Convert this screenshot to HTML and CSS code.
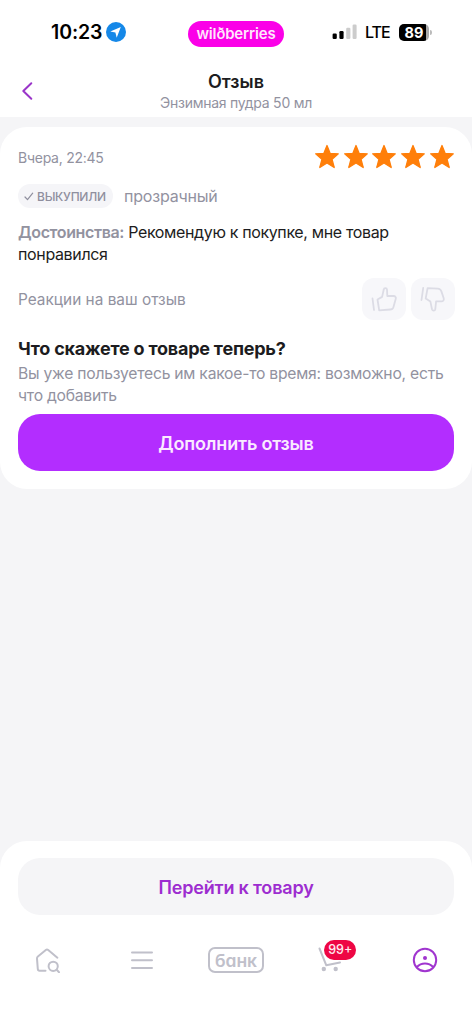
FILE: index.html
```html
<!DOCTYPE html>
<html lang="ru">
<head>
<meta charset="utf-8">
<meta name="viewport" content="width=device-width">
<title>Отзыв</title>
<link rel="stylesheet" href="styles.css">
</head>
<body>
<div class="app">
  <div class="status">
    <div class="status-left">
      <span class="clock">10:23</span>
      <svg class="location" viewBox="0 0 20 20"><circle cx="10" cy="10" r="10" fill="#1588e8"/><path d="M14.8 5.1 4.3 9.4l5.1 1.2 1.3 5.1z" fill="#fff"/></svg>
    </div>
    <div class="brand">wilðberries</div>
    <div class="status-right">
      <svg class="signal" viewBox="0 0 25 16"><rect x="0.6" y="9.5" width="4.2" height="5.5" rx="1.2" fill="#000"/><rect x="7.4" y="7" width="4.2" height="8" rx="1.2" fill="#000"/><rect x="14.2" y="3.8" width="4.2" height="11.2" rx="1.2" fill="#ccc"/><rect x="20.6" y="0.5" width="4" height="14.5" rx="1.2" fill="#ccc"/></svg>
      <span class="lte">LTE</span>
      <div class="battery"><span class="level">89</span><i class="cap"></i></div>
    </div>
  </div>
  <header class="header">
    <svg class="back" viewBox="0 0 12 20"><path d="M10.300 2.200 2.300 10l8 7.800" fill="none" stroke="#9a35c9" stroke-width="2" stroke-linecap="round" stroke-linejoin="round"/></svg>
    <div class="titles">
      <h1 class="title">Отзыв</h1>
      <div class="subtitle">Энзимная пудра 50 мл</div>
    </div>
  </header>
  <main class="content">
    <section class="card">
      <div class="meta">
        <span class="date">Вчера, 22:45</span>
        <div class="stars">
          <svg class="star" viewBox="0 0 26 26"><use href="#star"/></svg>
          <svg class="star" viewBox="0 0 26 26"><use href="#star"/></svg>
          <svg class="star" viewBox="0 0 26 26"><use href="#star"/></svg>
          <svg class="star" viewBox="0 0 26 26"><use href="#star"/></svg>
          <svg class="star" viewBox="0 0 26 26"><path id="star" d="m13 1.500 3.200 7.900 8.100.4-6.200 5.500 2.100 8.200-7.200-4.500-7.200 4.500 2.100-8.200L1.700 9.800l8.100-.4z" fill="#ff7f0a" stroke="#ff7f0a" stroke-width="1.300" stroke-linejoin="round"/></svg>
        </div>
      </div>
      <div class="tags">
        <span class="bought"><svg class="check" viewBox="0 0 10 9"><path d="m1 5 2.500 2.700L8.700 1.200" fill="none" stroke="#8f8f9e" stroke-width="1.200" stroke-linecap="round" stroke-linejoin="round"/></svg><span class="bought-text">ВЫКУПИЛИ</span></span>
        <span class="color">прозрачный</span>
      </div>
      <p class="review"><span class="pros">Достоинства:</span> <span class="text">Рекомендую к покупке, мне товар<br>понравился</span></p>
      <div class="reactions">
        <span class="reaction-label">Реакции на ваш отзыв</span>
        <div class="votes">
          <span class="vote"><svg class="thumb" viewBox="0 0 26 26"><g fill="none" stroke="#dcdce5" stroke-width="1.800" stroke-linejoin="round" stroke-linecap="round"><path d="M1.500 12.500 3 24M6.500 13.500l4.600-2.600 1.700-7.600c.3-1.700 3-1.600 3.200.2l.3 6.500h6.200c2 0 2.700 1.500 2.200 3l-2.300 8.200c-.5 1.600-1.400 2.300-3.200 2.300l-11 .8z"/></g></svg></span>
          <span class="vote"><svg class="thumb" viewBox="0 0 26 26"><g fill="none" stroke="#dcdce5" stroke-width="1.800" stroke-linejoin="round" stroke-linecap="round"><path d="M3.200 1.800 1.500 14M7.600 2.200l10.200.5c2 .1 3 1 3.600 2.700l2.300 6.800c.5 2-.5 3.200-2.400 3.200h-5.200l-.8 7.800c-.3 1.900-2.800 1.900-3.300.1l-1.600-7.700-4.700-3.200z"/></g></svg></span>
        </div>
      </div>
      <h2 class="question">Что скажете о товаре теперь?</h2>
      <p class="hint">Вы уже пользуетесь им какое-то время: возможно, есть<br>что добавить</p>
      <button class="button primary">Дополнить отзыв</button>
    </section>
  </main>
  <footer class="bottom">
    <button class="button secondary">Перейти к товару</button>
    <nav class="tabs">
      <span class="tab"><svg class="icon" viewBox="0 0 26 26"><g fill="none" stroke="#c0c0ca" stroke-width="2" stroke-linecap="round" stroke-linejoin="round"><path d="M11.500 23.700H5.600q-1.700 0-1.800-1.700L3 11.600q-.1-1.300.9-2.100L11.800 3q1.200-1 2.400 0l9.200 7.700"/><circle cx="19.200" cy="19.300" r="4.600"/><path d="m22.700 22.800 2.300 2.400"/></g></svg></span>
      <span class="tab"><svg class="icon" viewBox="0 0 26 26"><path d="M3 5.500h20M3 13.200h20M3 21h20" stroke="#c0c0ca" stroke-width="2" stroke-linecap="round"/></svg></span>
      <span class="tab"><span class="bank">банк</span></span>
      <span class="tab cart"><svg class="icon" viewBox="0 0 26 26"><path d="m2.500 1.500 6.800 16.800 13.700-2.800" fill="none" stroke="#c0c0ca" stroke-width="2" stroke-linecap="round" stroke-linejoin="round"/><circle cx="6.800" cy="22" r="2.200" fill="#c0c0ca"/><circle cx="18.700" cy="22" r="2.200" fill="#c0c0ca"/></svg><span class="badge">99+</span></span>
      <span class="tab"><svg class="icon" viewBox="0 0 26 26"><g fill="none" stroke="#a035cf" stroke-width="2"><circle cx="13" cy="13" r="11.200"/><path d="M4.600 20.200c4.800-5 12-5 16.800 0"/></g><circle cx="13" cy="10.900" r="2" fill="#a035cf"/></svg></span>
    </nav>
  </footer>
</div>
</body>
</html>
```
FILE: styles.css
```css
* { box-sizing: border-box; }
body { margin: 0; font-family: Inter, "Liberation Sans", sans-serif; color: #1c1c20; background: #f5f5f7; }
h1, h2, p { margin: 0; }
svg { display: block; flex: none; }
.app { width: 472px; height: 1024px; display: flex; flex-direction: column; overflow: hidden; white-space: nowrap; }

.status { height: 66px; background: #fff; display: grid; grid-template-columns: 188px 96px 1fr; align-items: center; }
.status-left { display: flex; align-items: center; gap: 4px; padding-left: 51px; margin-top: -2px; }
.clock { font-size: 19.5px; font-weight: 600; color: #000; letter-spacing: -0.1px; width: 51px; }
.location { width: 20px; height: 20px; }
.brand { height: 26px; border-radius: 13px; background: #fb00e8; color: #ffe6fc; font-size: 15px; font-weight: 600; line-height: 25px; text-align: center; letter-spacing: -0.15px; margin-top: 2px; }
.status-right { display: flex; align-items: center; padding-left: 48px; margin-top: -2px; }
.signal { width: 25px; height: 16px; }
.lte { font-size: 16px; font-weight: 500; color: #000; margin-left: 8px; letter-spacing: -1px; width: 25px; }
.battery { display: flex; align-items: center; gap: 1px; margin-left: 9px; }
.level { width: 30px; height: 17px; border-radius: 5px; background: linear-gradient(90deg, #000 27px, #aaa 27px); color: #fff; font-size: 14.500px; font-weight: 700; line-height: 17px; text-align: center; }
.cap { width: 2px; height: 5px; border-radius: 0 2px 2px 0; background: #bbb; }

.header { height: 51px; background: #fff; display: grid; grid-template-columns: 60px 1fr 60px; }
.back { width: 12px; height: 20px; margin: 15px 0 0 21px; }
.titles { text-align: center; padding-top: 5px; }
.title { font-size: 18px; line-height: 22px; font-weight: 600; }
.subtitle { font-size: 14px; line-height: 19px; color: #92929f; letter-spacing: -0.25px; }

.content { flex: 1; padding-top: 10px; }
.card { background: #fff; border-radius: 27px; height: 362px; padding: 14px 18px 18px; }
.meta { display: flex; justify-content: space-between; align-items: center; height: 32px; }
.date { font-size: 14px; color: #92929f; letter-spacing: -0.25px; }
.stars { display: flex; gap: 2.600px; margin-right: -0.5px; }
.star { width: 26px; height: 26px; }
.tags { display: flex; align-items: center; height: 24px; margin-top: 11px; }
.bought { display: flex; align-items: center; width: 95px; height: 24px; border-radius: 12px; background: #f5f5f8; padding-left: 6px; gap: 3px; }
.check { width: 10px; height: 9px; }
.bought-text { font-size: 12px; font-weight: 500; color: #8f8f9e; letter-spacing: -0.25px; }
.color { font-size: 16px; color: #92929f; margin-left: 11px; letter-spacing: -0.2px; }
.review { font-size: 16px; line-height: 22px; margin-top: 13px; letter-spacing: -0.36px; }
.pros { color: #92929f; font-weight: 600; letter-spacing: -0.37px; }
.reactions { display: flex; justify-content: space-between; align-items: center; height: 42px; margin-top: 13px; }
.reaction-label { font-size: 15.400px; color: #92929f; }
.votes { display: flex; gap: 5px; margin-right: -1px; }
.vote { width: 44px; height: 42px; border-radius: 12px; background: #f7f7fa; display: flex; align-items: center; justify-content: center; }
.thumb { width: 26px; height: 26px; }
.question { font-size: 18px; line-height: 24px; font-weight: 700; margin-top: 17px; letter-spacing: -0.22px; }
.hint { font-size: 15.700px; line-height: 22px; color: #92929f; margin-top: 2px; letter-spacing: -0.24px; }

.button { display: block; width: 100%; height: 57px; border: 0; border-radius: 22px; padding: 2px 0 0; font-family: inherit; font-size: 18px; font-weight: 600; letter-spacing: -0.18px; }
.primary { background: #b32dff; color: #faeaff; margin-top: 7px; }
.secondary { background: #f5f5f7; color: #9d2dd0; }

.bottom { height: 183px; background: #fff; border-radius: 27px 27px 0 0; padding-top: 17px; }
.bottom .button { width: 436px; margin: 0 18px; }
.tabs { display: grid; grid-template-columns: repeat(5, 1fr); height: 57px; margin-top: 16px; }
.tab { display: flex; align-items: center; justify-content: center; position: relative; }
.icon { width: 26px; height: 26px; }
.bank { width: 56px; height: 26px; border: 2px solid #c0c0ca; border-radius: 7px; color: #c0c0ca; font-size: 17.500px; font-weight: 600; font-feature-settings: "cv11"; line-height: 23px; text-align: center; }
.badge { position: absolute; left: 41px; top: 9px; width: 32px; height: 20px; border-radius: 10px; background: #ee0644; color: #ffe9ee; font-size: 12.500px; font-weight: 500; line-height: 20px; text-align: center; }
```
